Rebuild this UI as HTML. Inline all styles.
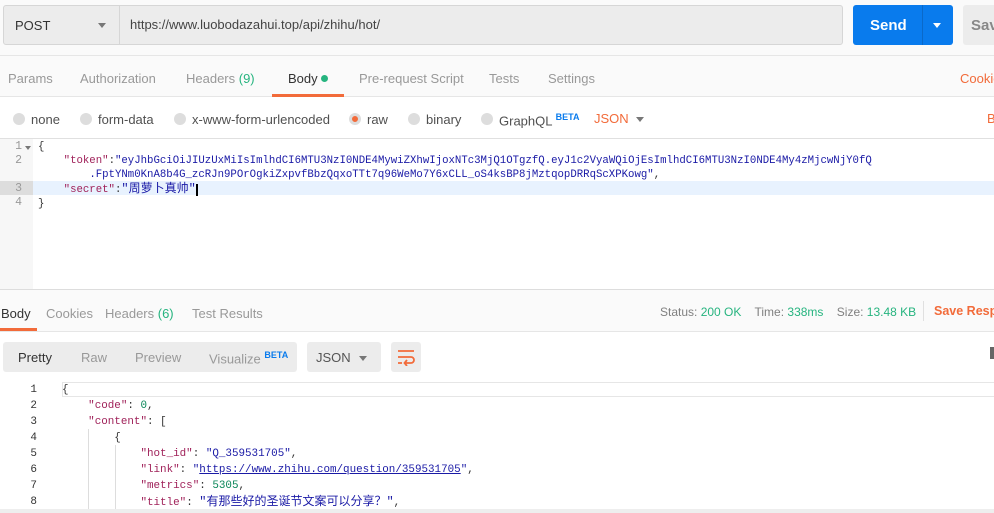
<!DOCTYPE html>
<html><head><meta charset="utf-8"><style>
*{margin:0;padding:0;box-sizing:border-box}
body{width:994px;height:513px;overflow:hidden;background:#fff;font-family:"Liberation Sans","Noto Sans CJK SC",sans-serif;font-size:13px;color:#505050;position:relative}
.a{position:absolute;white-space:nowrap}
.mono{font-family:"Liberation Mono","Noto Sans CJK SC",monospace}
.k{color:#a0225a}.s{color:#1a1aa6}.n{color:#098658}
.g{color:#999}
.rad{position:absolute;width:12px;height:12px;border-radius:50%;background:#ddd;top:113px}
</style></head><body>
<div class="a" style="left:0;top:0;width:994px;height:56px;background:#fafafa;border-bottom:1px solid #e6e6e6"></div>
<div class="a" style="left:3px;top:5px;width:840px;height:40px;background:#ececec;border:1px solid #d6d6d6;border-radius:3px"></div>
<div class="a" style="left:119px;top:5px;width:1px;height:40px;background:#d6d6d6"></div>
<div class="a" style="left:15px;top:18px;font-size:13px;color:#333">POST</div>
<div class="a" style="left:98px;top:23px;border-left:4px solid transparent;border-right:4px solid transparent;border-top:5px solid #777"></div>
<div class="a" style="left:130px;top:17px;font-size:13px;color:#444">https://www.luobodazahui.top/api/zhihu/hot/</div>
<div class="a" style="left:853px;top:5px;width:100px;height:40px;background:#097bed;border-radius:3px"></div>
<div class="a" style="left:922px;top:5px;width:1px;height:40px;background:#0a69c9"></div>
<div class="a" style="left:870px;top:17px;font-size:15px;font-weight:bold;color:#fff">Send</div>
<div class="a" style="left:933px;top:23px;border-left:4px solid transparent;border-right:4px solid transparent;border-top:5px solid #fff"></div>
<div class="a" style="left:963px;top:5px;width:40px;height:40px;background:#ececec;border-radius:3px"></div>
<div class="a" style="left:971px;top:17px;font-size:15px;font-weight:bold;color:#888">Sav</div>
<div class="a" style="left:0;top:56px;width:994px;height:41px;background:#fafafa;border-bottom:1px solid #e6e6e6"></div>
<div class="a g" style="left:8px;top:71px">Params</div>
<div class="a g" style="left:80px;top:71px">Authorization</div>
<div class="a g" style="left:186px;top:71px">Headers <span style="color:#26b47f">(9)</span></div>
<div class="a" style="left:288px;top:71px;color:#333">Body</div>
<div class="a" style="left:321px;top:75px;width:7px;height:7px;border-radius:50%;background:#26b47f"></div>
<div class="a" style="left:272px;top:94px;width:72px;height:3px;background:#f26b3a"></div>
<div class="a g" style="left:359px;top:71px">Pre-request Script</div>
<div class="a g" style="left:489px;top:71px">Tests</div>
<div class="a g" style="left:548px;top:71px">Settings</div>
<div class="a" style="left:960px;top:71px;color:#f26b3a">Cookies</div>
<div class="a" style="left:0;top:138px;width:994px;height:1px;background:#e0e0e0"></div>
<div class="rad" style="left:13px"></div><div class="a" style="left:31px;top:112px">none</div>
<div class="rad" style="left:80px"></div><div class="a" style="left:98px;top:112px">form-data</div>
<div class="rad" style="left:174px"></div><div class="a" style="left:192px;top:112px">x-www-form-urlencoded</div>
<div class="rad" style="left:349px;background:#f26b3a;border:3px solid #ddd"></div><div class="a" style="left:367px;top:112px">raw</div>
<div class="rad" style="left:408px"></div><div class="a" style="left:426px;top:112px">binary</div>
<div class="rad" style="left:481px"></div><div class="a" style="left:499px;top:112px">GraphQL <sup style="color:#097bed;font-size:9px;font-weight:bold">BETA</sup></div>
<div class="a" style="left:594px;top:111px;color:#f26b3a;font-size:13px">JSON</div>
<div class="a" style="left:636px;top:117px;border-left:4px solid transparent;border-right:4px solid transparent;border-top:5px solid #777"></div>
<div class="a" style="left:987px;top:111px;color:#f26b3a">B</div>
<div class="a" style="left:0;top:139px;width:33px;height:150px;background:#f7f7f7"></div>
<div class="a" style="left:0;top:181px;width:33px;height:14px;background:#ddd"></div>
<div class="a" style="left:33px;top:181px;width:961px;height:14px;background:#e8f2fe"></div>
<div class="a mono" style="left:0;top:140px;font-size:11.5px;line-height:14px;color:#999;width:22px;text-align:right">1<br>2<br><br>3<br>4</div>
<div class="a" style="left:25px;top:146px;border-left:3px solid transparent;border-right:3px solid transparent;border-top:4px solid #777"></div>
<div class="a mono" style="left:38px;top:140px;font-size:10.7px;line-height:14px;color:#333">{<br>&nbsp;&nbsp;&nbsp;&nbsp;<span class="k">"token"</span>:<span class="s">"eyJhbGciOiJIUzUxMiIsImlhdCI6MTU3NzI0NDE4MywiZXhwIjoxNTc3MjQ1OTgzfQ.eyJ1c2VyaWQiOjEsImlhdCI6MTU3NzI0NDE4My4zMjcwNjY0fQ</span><br>&nbsp;&nbsp;&nbsp;&nbsp;&nbsp;&nbsp;&nbsp;&nbsp;<span class="s">.FptYNm0KnA8b4G_zcRJn9POrOgkiZxpvfBbzQqxoTTt7q96WeMo7Y6xCLL_oS4ksBP8jMztqopDRRqScXPKowg"</span>,<br>&nbsp;&nbsp;&nbsp;&nbsp;<span class="k">"secret"</span>:<span class="s" style="font-size:12px">"周萝卜真帅"</span><span style="border-left:2px solid #000"></span><br>}</div>
<div class="a" style="left:0;top:289px;width:994px;height:43px;background:#fafafa;border-top:1px solid #ddd;border-bottom:1px solid #e6e6e6"></div>
<div class="a" style="left:1px;top:306px;color:#333">Body</div>
<div class="a" style="left:0;top:328px;width:37px;height:3px;background:#f26b3a"></div>
<div class="a g" style="left:46px;top:306px">Cookies</div>
<div class="a g" style="left:105px;top:306px">Headers <span style="color:#26b47f">(6)</span></div>
<div class="a g" style="left:192px;top:306px">Test Results</div>
<div class="a" style="left:660px;top:305px;font-size:12px;color:#808080">Status: <span style="color:#26b47f">200 OK</span>&nbsp;&nbsp;&nbsp; Time: <span style="color:#26b47f">338ms</span>&nbsp;&nbsp;&nbsp; Size: <span style="color:#26b47f">13.48 KB</span></div>
<div class="a" style="left:923px;top:301px;width:1px;height:20px;background:#e0e0e0"></div>
<div class="a" style="left:934px;top:304px;color:#f26b3a;font-weight:bold;font-size:12.5px">Save Response</div>
<div class="a" style="left:3px;top:342px;width:294px;height:30px;background:#ececec;border-radius:3px"></div>
<div class="a" style="left:18px;top:350px;color:#333">Pretty</div>
<div class="a g" style="left:81px;top:350px">Raw</div>
<div class="a g" style="left:135px;top:350px">Preview</div>
<div class="a g" style="left:209px;top:350px">Visualize <sup style="color:#097bed;font-size:9px;font-weight:bold">BETA</sup></div>
<div class="a" style="left:307px;top:342px;width:74px;height:30px;background:#ececec;border-radius:3px"></div>
<div class="a" style="left:316px;top:350px;color:#555">JSON</div>
<div class="a" style="left:359px;top:356px;border-left:4px solid transparent;border-right:4px solid transparent;border-top:5px solid #777"></div>
<div class="a" style="left:391px;top:342px;width:30px;height:30px;background:#ececec;border-radius:3px"></div>
<svg class="a" style="left:397px;top:348px" width="18" height="18" viewBox="0 0 18 18" fill="none" stroke="#f26b3a" stroke-width="1.8"><path d="M1 3h16M1 9h13a3 3 0 0 1 0 6H8M10 12l-2.5 3 2.5 3M1 15h4"/></svg>
<div class="a" style="left:990px;top:347px;width:4px;height:12px;background:#666"></div>
<div class="a" style="left:62px;top:382px;width:932px;height:15px;border:1px solid #e6e6e6;border-right:none"></div>
<div class="a mono" style="left:20px;top:382px;font-size:11px;line-height:16px;color:#333;width:17px;text-align:right">1<br>2<br>3<br>4<br>5<br>6<br>7<br>8</div>
<div class="a" style="left:88px;top:429px;width:1px;height:84px;background:#ddd"></div>
<div class="a" style="left:115px;top:445px;width:1px;height:68px;background:#ddd"></div>
<div class="a mono" style="left:62px;top:382px;font-size:10.9px;line-height:16px;color:#333">{<br>&nbsp;&nbsp;&nbsp;&nbsp;<span class="k">"code"</span>: <span class="n">0</span>,<br>&nbsp;&nbsp;&nbsp;&nbsp;<span class="k">"content"</span>: [<br>&nbsp;&nbsp;&nbsp;&nbsp;&nbsp;&nbsp;&nbsp;&nbsp;{<br>&nbsp;&nbsp;&nbsp;&nbsp;&nbsp;&nbsp;&nbsp;&nbsp;&nbsp;&nbsp;&nbsp;&nbsp;<span class="k">"hot_id"</span>: <span class="s">"Q_359531705"</span>,<br>&nbsp;&nbsp;&nbsp;&nbsp;&nbsp;&nbsp;&nbsp;&nbsp;&nbsp;&nbsp;&nbsp;&nbsp;<span class="k">"link"</span>: <span class="s">"<span style="text-decoration:underline">https://www.zhihu.com/question/359531705</span>"</span>,<br>&nbsp;&nbsp;&nbsp;&nbsp;&nbsp;&nbsp;&nbsp;&nbsp;&nbsp;&nbsp;&nbsp;&nbsp;<span class="k">"metrics"</span>: <span class="n">5305</span>,<br>&nbsp;&nbsp;&nbsp;&nbsp;&nbsp;&nbsp;&nbsp;&nbsp;&nbsp;&nbsp;&nbsp;&nbsp;<span class="k">"title"</span>: <span class="s" style="font-size:12px">"有那些好的圣诞节文案可以分享？"</span>,</div>
<div class="a" style="left:0;top:509px;width:994px;height:4px;background:#eee"></div>
</body></html>
